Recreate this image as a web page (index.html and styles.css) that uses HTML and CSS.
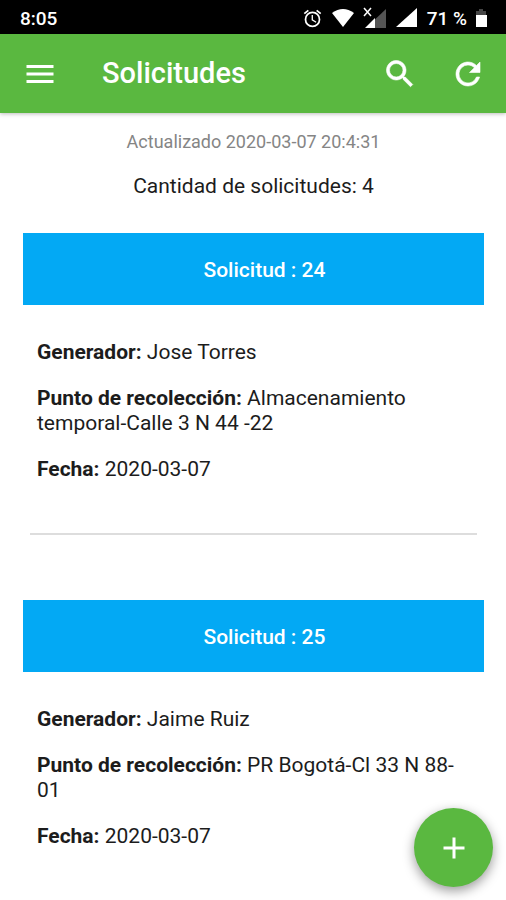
FILE: index.html
```html
<!DOCTYPE html>
<html lang="es">
<head>
<meta charset="utf-8">
<meta name="viewport" content="width=device-width, initial-scale=1">
<title>Solicitudes</title>
<link rel="stylesheet" href="styles.css">
</head>
<body>
<div class="status-bar">
  <span>8:05</span>
  <div class="status-icons">
    <svg class="alarm" viewBox="0 0 24 24"><path fill="currentColor" d="M22 5.720l-4.600-3.860-1.290 1.530 4.600 3.860L22 5.720zM7.880 3.390L6.600 1.860 2 5.710l1.290 1.530 4.590-3.850zM12.500 8H11v6l4.750 2.850.75-1.230-4-2.370V8zM12 4a9 9 0 1 0 0 18 9 9 0 0 0 0-18zm0 16a7 7 0 1 1 0-14 7 7 0 0 1 0 14z"/></svg>
    <svg class="wifi" viewBox="0 0 24 18"><path fill="currentColor" d="M1 4Q12-4 23 4L12 18z"/></svg>
    <svg class="no-signal" viewBox="0 0 24 22"><path fill="#555" d="M23 2v19H3z"/><path fill="currentColor" d="M2 21l10-10v10z"/><path stroke="currentColor" stroke-width="1.500" d="M1 1l7 8M8 1L1 9"/></svg>
    <div class="battery-level">
      <svg class="signal" viewBox="0 0 22 20"><path fill="currentColor" d="M22 0v19H1z"/></svg>
      <span>71 %</span>
    </div>
    <svg class="battery" viewBox="0 0 12 19"><path fill="#444" d="M4 0h4v2h3v4H1V2h3z"/><path fill="currentColor" d="M1 6h11v12H1z"/></svg>
  </div>
</div>
<header class="app-bar">
  <button class="icon-button" aria-label="Menú"><svg viewBox="0 0 24 24"><path fill="currentColor" d="M3 18h18v-2H3v2zm0-5h18v-2H3v2zm0-7v2h18V6H3z"/></svg></button>
  <h1>Solicitudes</h1>
  <button class="icon-button" aria-label="Buscar"><svg class="heavy" viewBox="0 0 24 24"><path fill="currentColor" d="M15.500 14h-.79l-.28-.27A6.500 6.500 0 1 0 13.730 14.430l.27.28v.79l5 4.990L20.490 19l-4.990-5zm-6 0a4.500 4.500 0 1 1 0-9 4.500 4.500 0 0 1 0 9z"/></svg></button>
  <button class="icon-button" aria-label="Actualizar"><svg class="heavy" viewBox="0 0 24 24"><path fill="currentColor" d="M17.650 6.350A8 8 0 1 0 19.730 14h-2.080A6 6 0 1 1 12 6c1.660 0 3.140.69 4.220 1.780L13 11h7V4l-2.350 2.350z"/></svg></button>
</header>
<main>
  <p class="updated">Actualizado 2020-03-07 20:4:31</p>
  <p class="count">Cantidad de solicitudes: 4</p>
  <article class="request">
    <button class="request-title">Solicitud : 24</button>
    <div class="details">
      <p><strong>Generador:</strong> Jose Torres</p>
      <p><strong>Punto de recolección:</strong> Almacenamiento temporal-Calle 3 N 44 -22</p>
      <p><strong>Fecha:</strong> 2020-03-07</p>
    </div>
  </article>
  <hr>
  <article class="request">
    <button class="request-title">Solicitud : 25</button>
    <div class="details">
      <p><strong>Generador:</strong> Jaime Ruiz</p>
      <p><strong>Punto de recolección:</strong> PR Bogotá-Cl 33 N 88-01</p>
      <p><strong>Fecha:</strong> 2020-03-07</p>
    </div>
  </article>
</main>
<button class="fab" aria-label="Agregar solicitud"><svg viewBox="0 0 24 24"><path fill="currentColor" d="M19 13h-6v6h-2v-6H5v-2h6V5h2v6h6v2z"/></svg></button>
</body>
</html>
```
FILE: styles.css
```css
* { box-sizing: border-box; }
body {
  margin: 0;
  background: #fff;
  color: #1c1c1c;
  font-family: Roboto, sans-serif;
  font-size: 21px;
  line-height: 25px;
}
button { border: 0; padding: 0; font: inherit; color: #fff; cursor: pointer; }
svg { display: block; flex: none; }
p { margin: 0; }
strong { font-weight: 700; }
.status-bar {
  display: flex;
  justify-content: space-between;
  align-items: center;
  height: 34px;
  padding: 2px 19px 0 20px;
  background: #000;
  color: #fff;
  font-size: 19px;
  font-weight: 500;
}
.status-icons { display: flex; align-items: center; gap: 8px; }
.battery-level { display: flex; align-items: center; gap: 10px; }
.alarm { width: 21px; height: 21px; }
.wifi { width: 24px; height: 18px; }
.no-signal { width: 24px; height: 22px; }
.signal { width: 22px; height: 20px; }
.battery { width: 12px; height: 19px; }
.app-bar {
  position: relative;
  display: flex;
  align-items: center;
  gap: 32px;
  height: 79px;
  padding: 0 20px 0 22px;
  background: #5ab840;
  color: #fff;
  box-shadow: 0 1px 4px #0004;
}
.app-bar h1 { flex: 1; margin: 0 0 0 12px; font-size: 29px; font-weight: 500; }
.icon-button { width: 36px; height: 36px; background: none; }
.icon-button svg { width: 36px; height: 36px; }
.heavy { stroke: currentColor; stroke-width: 0.4; }
main { padding: 16px 22px 20px 23px; }
.updated { color: #858585; font-size: 18px; text-align: center; }
.count { margin: 20px 0 34px; text-align: center; }
.request-title {
  display: block;
  width: 100%;
  height: 72px;
  padding: 3px 0 0 22px;
  background: #03a9f4;
  font-weight: 500;
}
.details { display: grid; gap: 21px; padding: 35px 14px; }
hr { margin: 16px 7px 65px; border: 0; border-top: 2px solid #ddd; }
.fab {
  position: fixed;
  right: 13px;
  bottom: 13px;
  display: grid;
  place-items: center;
  width: 79px;
  height: 79px;
  border-radius: 50%;
  background: #5ab840;
  box-shadow: 0 4px 12px #0006;
}
.fab svg { width: 36px; height: 36px; }
```
